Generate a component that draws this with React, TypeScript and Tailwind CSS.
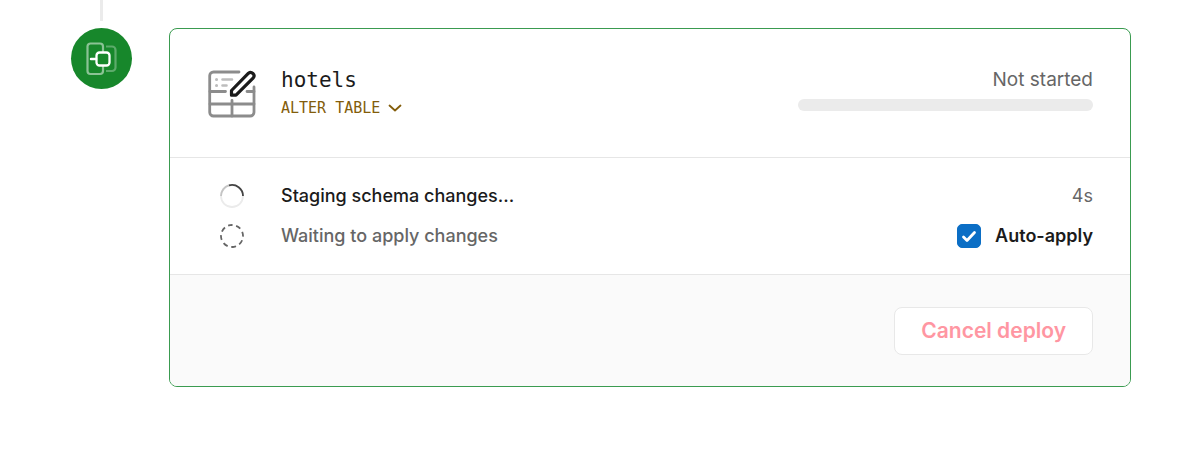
import { useState } from "react";

function BranchIcon() {
  return (
    <svg width="36" height="36" viewBox="0 0 36 36" fill="none" stroke="#fff" strokeWidth="2.200">
      <path
        d="M19 11V5.500A3 3 0 0 0 16 2.500H6.500A3 3 0 0 0 3.500 5.500V30A3 3 0 0 0 6.500 33H16A3 3 0 0 0 19 30V25"
        opacity="0.5"
      />
      <path d="M22 5.500H28A3.500 3.500 0 0 1 31.500 9V26.500A3.500 3.500 0 0 1 28 30H22" opacity="0.3" />
      <rect x="12.500" y="11.500" width="13" height="13" rx="3" strokeWidth="2.300" />
      <path d="M7 18H12" strokeWidth="2.500" strokeLinecap="round" />
    </svg>
  );
}

function TableEditIcon() {
  return (
    <svg width="48" height="48" viewBox="0 0 48 48" fill="none" strokeLinecap="round" strokeLinejoin="round">
      <g stroke="#8c8c8c" strokeWidth="2.800">
        <path d="M31 2H5.500A3.800 3.800 0 0 0 1.700 5.800V42.200A3.800 3.800 0 0 0 5.500 46H42.200A3.800 3.800 0 0 0 46 42.200V17" />
        <path d="M2 21.500H17.500M39 21.500H46M2 34H46M24 30.500V46" />
      </g>
      <path d="M14.500 9.500H24M14.500 15.500H18.500" stroke="#bdbdbd" strokeWidth="2.600" />
      <path d="M8.500 9.500H8.600M8.500 15.500H8.600" stroke="#bdbdbd" strokeWidth="3" />
      <path
        d="M23.500 25.200V20.500L40.500 3.200C43.500 0.800 47.700 4.800 45.300 7.800L28 25.200Z"
        fill="#fff"
        stroke="#1b1b1b"
        strokeWidth="3.200"
      />
    </svg>
  );
}

function SpinnerIcon() {
  return (
    <svg width="24" height="24" viewBox="0 0 24 24" fill="none" strokeWidth="1.800">
      <circle cx="12" cy="12" r="11" stroke="#ebebeb" />
      <path d="M1 12A11 11 0 0 1 9 1.400" stroke="#c4c4c4" />
      <path d="M9 1.400A11 11 0 0 1 23 12" stroke="#444" />
    </svg>
  );
}

function PendingIcon() {
  return (
    <svg width="24" height="24" viewBox="0 0 24 24" fill="none">
      <circle
        cx="12"
        cy="12"
        r="11"
        stroke="#666"
        strokeWidth="1.800"
        strokeDasharray="5 3.640"
        strokeDashoffset="2.500"
        transform="rotate(-100 12 12)"
      />
    </svg>
  );
}

export default function App() {
  const [autoApply, setAutoApply] = useState(true);

  return (
    <main className="flex gap-[37px] bg-white pl-[71px] pr-[69px] font-['Inter',sans-serif] text-[#1b1b1b]">
      <div className="flex shrink-0 flex-col items-center gap-[7px]">
        <div className="h-[21px] w-[3px] bg-[#ebebeb]" />
        <div className="flex size-[61px] items-center justify-center rounded-full bg-[#17872b]">
          <BranchIcon />
        </div>
      </div>

      <section className="mt-7 min-w-0 flex-1 overflow-hidden rounded-lg border border-[#3a9b50]">
        <div className="flex items-start justify-between pt-[37px] pr-[37px] pb-[35px] pl-[38px]">
          <div className="flex items-center gap-[25px]">
            <TableEditIcon />
            <div className="font-['DejaVu_Sans_Mono',monospace]">
              <h2 className="text-[21px] leading-7">hotels</h2>
              <button className="flex items-center gap-2 text-[15px] leading-7 text-[#835d0b]">
                ALTER TABLE
                <svg width="14" height="8" viewBox="0 0 14 8" fill="none" stroke="currentColor" strokeWidth="1.800">
                  <path d="M1.500 1.500L7 6.500L12.500 1.500" strokeLinecap="round" strokeLinejoin="round" />
                </svg>
              </button>
            </div>
          </div>
          <div className="w-[295px]">
            <p className="text-right text-[19px] leading-7 text-[#666]">Not started</p>
            <div className="mt-[5px] h-3 rounded-full bg-[#ebebeb]" />
          </div>
        </div>

        <div className="flex flex-col gap-3 border-t border-[#e6e6e6] py-6 pr-[37px] pl-[38px] text-lg leading-7">
          <div className="flex items-center">
            <span className="flex w-[73px] pl-3">
              <SpinnerIcon />
            </span>
            <span className="font-medium">Staging schema changes...</span>
            <span className="ml-auto text-[#666]">4s</span>
          </div>
          <div className="flex items-center">
            <span className="flex w-[73px] pl-3">
              <PendingIcon />
            </span>
            <span className="font-medium text-[#666]">Waiting to apply changes</span>
            <label className="ml-auto flex items-center gap-[14px] font-semibold">
              <span className="relative flex size-6">
                <input
                  type="checkbox"
                  checked={autoApply}
                  onChange={(e) => setAutoApply(e.target.checked)}
                  className="peer size-6 appearance-none rounded-[5px] border border-[#0b6ec5] bg-white checked:bg-[#0b6ec5]"
                />
                <svg
                  viewBox="0 0 24 24"
                  fill="none"
                  stroke="#fff"
                  strokeWidth="2.800"
                  className="pointer-events-none absolute inset-0 hidden peer-checked:block"
                >
                  <path d="M6.500 13L10 16.500L17.500 8.500" strokeLinecap="round" strokeLinejoin="round" />
                </svg>
              </span>
              Auto-apply
            </label>
          </div>
        </div>

        <div className="flex justify-end border-t border-[#e6e6e6] bg-[#fafafa] pt-8 pr-[37px] pb-[31px] pl-[38px]">
          <button className="h-12 rounded-lg border border-[#e8e8e8] bg-white px-[26px] text-[21px] leading-7 font-semibold text-[#ff96a2]">
            Cancel deploy
          </button>
        </div>
      </section>
    </main>
  );
}
